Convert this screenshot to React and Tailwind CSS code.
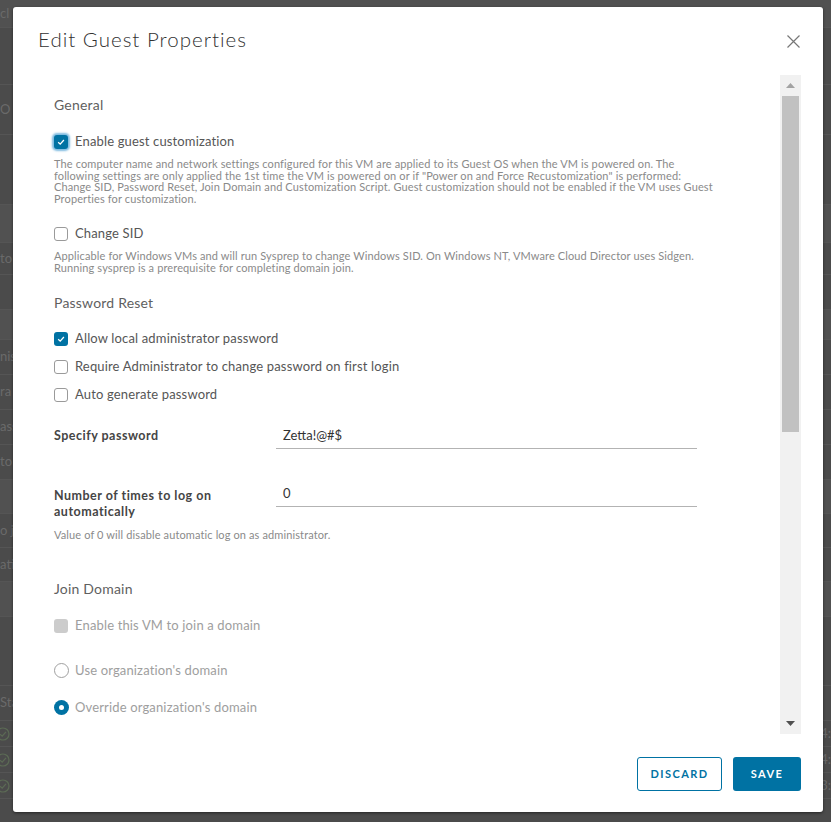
import React from "react";

const FONT = { fontFamily: "Lato, 'Noto Sans', sans-serif" };

function Check({ checked, glow, disabled }) {
  if (disabled) {
    return <span className="w-[14px] h-[14px] rounded-[3px] bg-[#cccccc] shrink-0" />;
  }
  if (checked) {
    return (
      <span
        className={
          "w-[14px] h-[14px] rounded-[3px] bg-[#0072a3] shrink-0 flex items-center justify-center " +
          (glow ? "shadow-[0_0_2px_2px_rgba(84,164,214,0.75)]" : "")
        }
      >
        <svg width="10" height="10" viewBox="0 0 10 10">
          <path d="M2.2 5.2 L4.2 7.1 L7.9 3" stroke="#fff" strokeWidth="1.3" fill="none" />
        </svg>
      </span>
    );
  }
  return <span className="w-[14px] h-[14px] rounded-[3px] border border-[#9a9a9a] bg-white shrink-0" />;
}

function Radio({ checked }) {
  if (checked) {
    return (
      <span className="w-[15px] h-[15px] rounded-full bg-[#0072a3] shrink-0 flex items-center justify-center">
        <span className="w-[5px] h-[5px] rounded-full bg-white" />
      </span>
    );
  }
  return <span className="w-[15px] h-[15px] rounded-full border border-[#a0a0a0] bg-white shrink-0" />;
}

function Row({ children, control, muted, radio, className = "" }) {
  return (
    <div className={"flex items-center h-[20px] " + (radio ? "gap-[6px] " : "gap-[7px] ") + className}>
      {control}
      <span className={"text-[13px] tracking-[0.15px] " + (muted ? "text-[#9e9e9e]" : "text-[#565656]")}>{children}</span>
    </div>
  );
}

function Help({ lines, className = "" }) {
  return (
    <div className={"text-[11px] leading-[11.5px] tracking-[0.12px] text-[#8a8a8a] " + className}>
      {lines.map((l, i) => (
        <div key={i} className="whitespace-nowrap">{l}</div>
      ))}
    </div>
  );
}

function CircleCheck() {
  return (
    <svg width="14" height="14" viewBox="0 0 14 14" className="-ml-[4px]">
      <circle cx="7" cy="7" r="6" stroke="#5c6b55" strokeWidth="1.2" fill="none" />
      <path d="M4 7.2 L6.2 9.2 L10 4.8" stroke="#5c6b55" strokeWidth="1.2" fill="none" />
    </svg>
  );
}

const bgRows = [
  { h: 28, t: "cl", band: true },
  { h: 57, t: "" },
  { h: 50, t: "O" },
  { h: 70, t: "" },
  { h: 38, t: "", band: true },
  { h: 32, t: "to" },
  { h: 35, t: "" },
  { h: 30, t: "", band: true },
  { h: 35, t: "nis" },
  { h: 35, t: "ra" },
  { h: 35, t: "ass" },
  { h: 35, t: "to" },
  { h: 34, t: "", band: true },
  { h: 34, t: "o jo" },
  { h: 34, t: "ati" },
  { h: 35, t: "", band: true },
  { h: 69, t: "" },
  { h: 35, t: "Sta" },
  { h: 26, c: true, r: "4:" },
  { h: 26, c: true, r: "4:" },
  { h: 26, c: true, r: "3:" },
];

export default function App() {
  return (
    <div className="relative w-[831px] h-[822px] overflow-hidden bg-[#4b4b4b]" style={FONT}>
      {/* page behind overlay */}
      <div className="flex flex-col">
        {bgRows.map((r, i) => (
          <div
            key={i}
            className={
              "flex items-center justify-between border-b border-[#555555] text-[13px] text-[#6a6a6a] " +
              (r.band ? "bg-[#515151]" : "")
            }
            style={{ height: r.h }}
          >
            <span>{r.c ? <CircleCheck /> : r.t}</span>
            <span>{r.r || ""}</span>
          </div>
        ))}
      </div>

      {/* modal */}
      <div className="absolute left-[13px] top-[7px] w-[810px] h-[805px] bg-white rounded-[3px] shadow-[0_1px_3px_rgba(0,0,0,0.5)] flex flex-col">
        <div className="h-[68px] shrink-0 flex items-start justify-between pl-[25px] pr-[23px] pt-[18px]">
          <h1 className="text-[20.5px] leading-[28px] text-[#313131] font-light tracking-[1px]">Edit Guest Properties</h1>
          <svg width="13" height="13" viewBox="0 0 13 13" className="mt-[10px]">
            <path d="M0.5 0.5 L12.5 12.5 M12.5 0.5 L0.5 12.5" stroke="#777" strokeWidth="1.2" />
          </svg>
        </div>

        <div className="h-[659px] shrink-0 flex pl-[25px] pr-[22px]">
          <div className="flex-1 overflow-hidden pl-[16px] pt-[20px]">
            <div className="text-[14px] leading-[20px] tracking-[0.2px] text-[#5f5f5f]">General</div>
            <Row className="mt-[17px]" control={<Check checked glow />}>Enable guest customization</Row>
            <Help
              className="mt-[6px]"
              lines={[
                "The computer name and network settings configured for this VM are applied to its Guest OS when the VM is powered on. The",
                "following settings are only applied the 1st time the VM is powered on or if \"Power on and Force Recustomization\" is performed:",
                "Change SID, Password Reset, Join Domain and Customization Script. Guest customization should not be enabled if the VM uses Guest",
                "Properties for customization.",
              ]}
            />
            <Row className="mt-[20px]" control={<Check />}>Change SID</Row>
            <Help
              className="mt-[6px]"
              lines={[
                "Applicable for Windows VMs and will run Sysprep to change Windows SID. On Windows NT, VMware Cloud Director uses Sidgen.",
                "Running sysprep is a prerequisite for completing domain join.",
              ]}
            />
            <div className="mt-[20px] text-[14px] leading-[20px] tracking-[0.2px] text-[#5f5f5f]">Password Reset</div>
            <Row className="mt-[16px]" control={<Check checked />}>Allow local administrator password</Row>
            <Row className="mt-[8px]" control={<Check />}>Require Administrator to change password on first login</Row>
            <Row className="mt-[8px]" control={<Check />}>Auto generate password</Row>

            <div className="mt-[19px] flex items-start">
              <div className="w-[222px] h-[24px] flex items-center text-[12.5px] font-bold tracking-[0.5px] text-[#454545]">Specify password</div>
              <div className="w-[421px] h-[25px] border-b border-[#b3b3b3] flex items-center pl-[7px] text-[13px] text-[#333]">
                Zetta!@#$
              </div>
            </div>

            <div className="mt-[33px] flex items-start">
              <div className="w-[222px] pt-[6px] text-[12.5px] leading-[16px] font-bold tracking-[0.5px] text-[#454545]">
                Number of times to log on
                <br />
                automatically
              </div>
              <div className="w-[421px] h-[25px] border-b border-[#b3b3b3] flex items-center pl-[7px] text-[13px] text-[#333]">
                0
              </div>
            </div>
            <Help className="mt-[9px]" lines={["Value of 0 will disable automatic log on as administrator."]} />

            <div className="mt-[38px] text-[14px] leading-[20px] tracking-[0.2px] text-[#5f5f5f]">Join Domain</div>
            <Row className="mt-[17px]" control={<Check disabled />} muted>Enable this VM to join a domain</Row>
            <Row className="mt-[25px]" control={<Radio />} muted radio>Use organization's domain</Row>
            <Row className="mt-[17px]" control={<Radio checked />} muted radio>Override organization's domain</Row>
          </div>

          {/* scrollbar */}
          <div className="w-[21px] shrink-0 bg-[#f1f1f1] flex flex-col items-center">
            <div className="h-[21px] w-full flex items-center justify-center">
              <svg width="9" height="5" viewBox="0 0 9 5"><path d="M4.5 0 L9 5 L0 5 Z" fill="#a3a3a3" /></svg>
            </div>
            <div className="w-[17px] h-[336px] bg-[#c1c1c1]" />
            <div className="flex-1" />
            <div className="h-[21px] w-full flex items-center justify-center">
              <svg width="9" height="5" viewBox="0 0 9 5"><path d="M0 0 L9 0 L4.5 5 Z" fill="#505050" /></svg>
            </div>
          </div>
        </div>

        <div className="flex-1 flex justify-end items-start gap-[11px] pt-[23px] pr-[22px]">
          <button className="w-[85px] h-[34px] rounded-[3px] border border-[#0072a3] bg-white text-[#0072a3] text-[11px] font-bold tracking-[0.13em]">
            DISCARD
          </button>
          <button className="w-[68px] h-[34px] rounded-[3px] bg-[#0072a3] text-white text-[11px] font-bold tracking-[0.13em]">
            SAVE
          </button>
        </div>
      </div>
    </div>
  );
}
